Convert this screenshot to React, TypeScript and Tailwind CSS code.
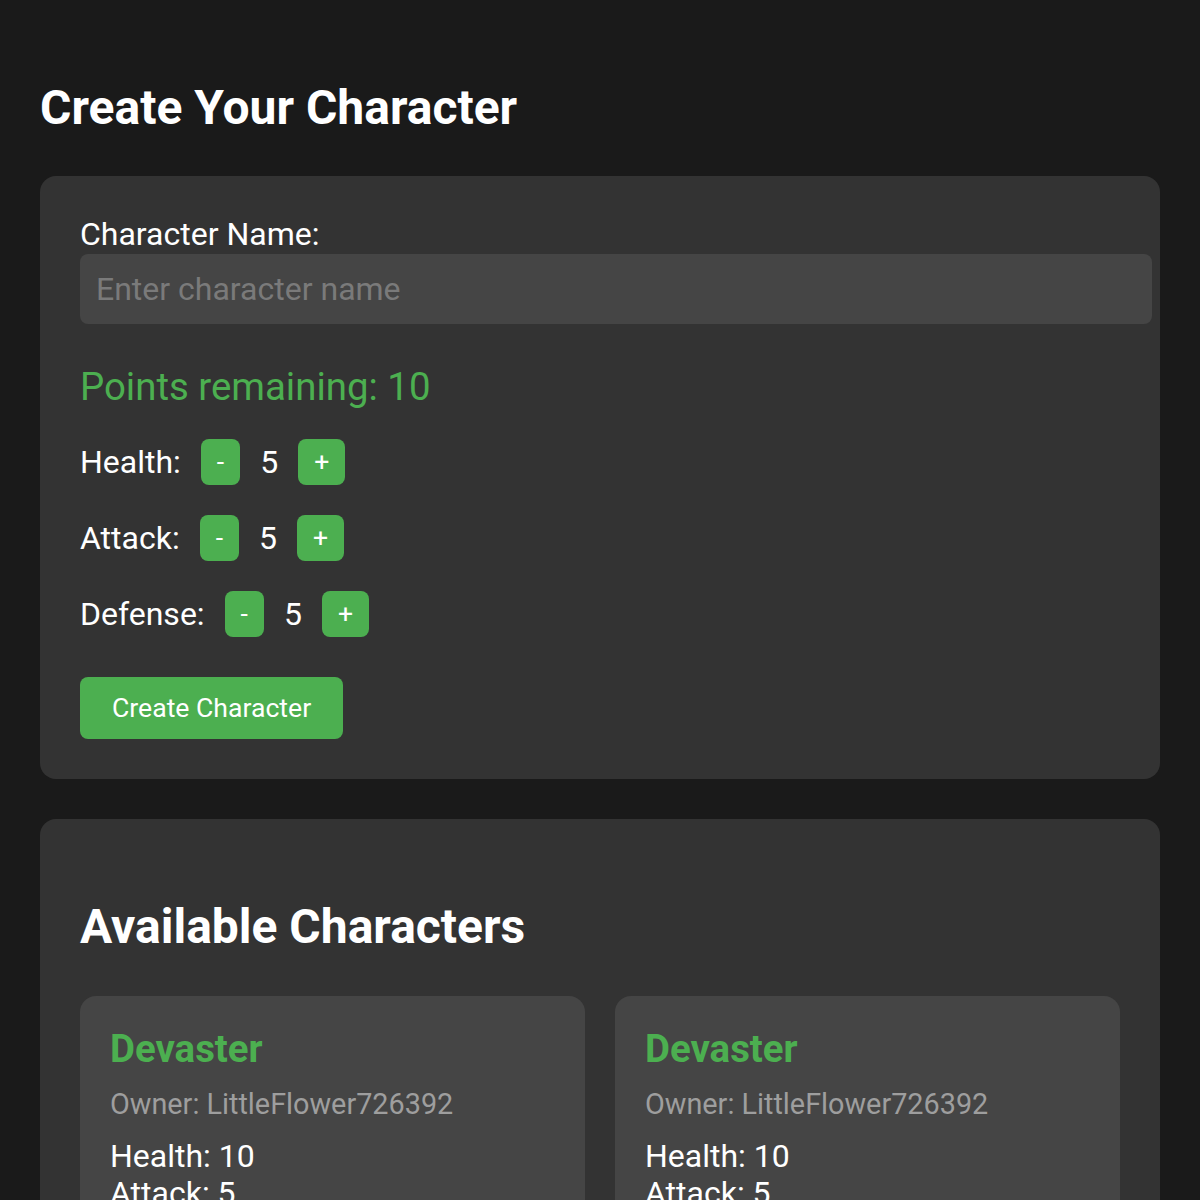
import { useState } from "react";

// Character builder — point allocation form plus the list of existing characters.

type Stat = "health" | "attack" | "defense";

interface Character {
  id: number;
  name: string;
  owner: string;
  health: number;
  attack: number;
  defense: number;
}

const characters: Character[] = [
  { id: 1, name: "Devaster", owner: "LittleFlower726392", health: 10, attack: 5, defense: 5 },
  { id: 2, name: "Devaster", owner: "LittleFlower726392", health: 10, attack: 5, defense: 5 },
];

const statLabels: Record<Stat, string> = {
  health: "Health:",
  attack: "Attack:",
  defense: "Defense:",
};

function StatRow({
  stat,
  value,
  onChange,
}: {
  stat: Stat;
  value: number;
  onChange: (delta: number) => void;
}) {
  return (
    <div className="mt-[30px] flex h-[46px] items-center">
      <span className="mr-[20px] text-[32px] text-white">{statLabels[stat]}</span>
      <button
        onClick={() => onChange(-1)}
        className="flex h-[46px] items-center rounded-[8px] bg-[#4caf50] px-[16px] text-[26.6px] text-white"
      >
        -
      </button>
      <span className="mx-[20px] text-[32px] text-white">{value}</span>
      <button
        onClick={() => onChange(1)}
        className="flex h-[46px] items-center rounded-[8px] bg-[#4caf50] px-[16px] text-[26.6px] text-white"
      >
        +
      </button>
    </div>
  );
}

export default function App() {
  const [name, setName] = useState("");
  const [stats, setStats] = useState<Record<Stat, number>>({
    health: 5,
    attack: 5,
    defense: 5,
  });
  const [points, setPoints] = useState(10);

  function adjust(stat: Stat, delta: number) {
    if (delta > 0 && points <= 0) return;
    if (delta < 0 && stats[stat] <= 1) return;
    setStats({ ...stats, [stat]: stats[stat] + delta });
    setPoints(points - delta);
  }

  return (
    <div className="min-h-screen bg-[#1a1a1a] px-[40px] pt-[40px] font-['Roboto',sans-serif] text-white">
      <h1 className="mt-[40px] text-[48px] font-bold leading-[56px]">Create Your Character</h1>

      <div className="mt-[40px] rounded-[16px] bg-[#333333] p-[40px]">
        <label className="block text-[32px] leading-[37.5px]">Character Name:</label>
        <input
          value={name}
          onChange={(e) => setName(e.target.value)}
          placeholder="Enter character name"
          className="block h-[70px] w-[calc(100%+32px)] rounded-[8px] bg-[#454545] px-[16px] text-[32px] text-white outline-none placeholder:text-[#7a7a7a]"
        />

        <p className="mt-[40px] text-[38.4px] leading-[45px] text-[#4caf50]">
          Points remaining: {points}
        </p>

        {(["health", "attack", "defense"] as Stat[]).map((s) => (
          <StatRow key={s} stat={s} value={stats[s]} onChange={(d) => adjust(s, d)} />
        ))}

        <button className="mt-[40px] h-[62px] rounded-[8px] bg-[#4caf50] px-[32px] text-[26.6px] text-white">
          Create Character
        </button>
      </div>

      <div className="mt-[40px] rounded-[16px] bg-[#333333] p-[40px]">
        <h2 className="mt-[40px] text-[48px] font-bold leading-[56px]">Available Characters</h2>

        <div className="mt-[41px] grid grid-cols-2 gap-[30px]">
          {characters.map((c) => (
            <div key={c.id} className="rounded-[16px] bg-[#454545] p-[30px]">
              <h3 className="text-[38.4px] font-bold leading-[45px] text-[#4caf50]">{c.name}</h3>
              <p className="mt-[16px] text-[28.8px] leading-[34px] text-[#9e9e9e]">Owner: {c.owner}</p>
              <div className="mt-[17px] text-[32px] leading-[37.5px]">
                <p>Health: {c.health}</p>
                <p>Attack: {c.attack}</p>
                <p>Defense: {c.defense}</p>
              </div>
            </div>
          ))}
        </div>
      </div>
    </div>
  );
}
